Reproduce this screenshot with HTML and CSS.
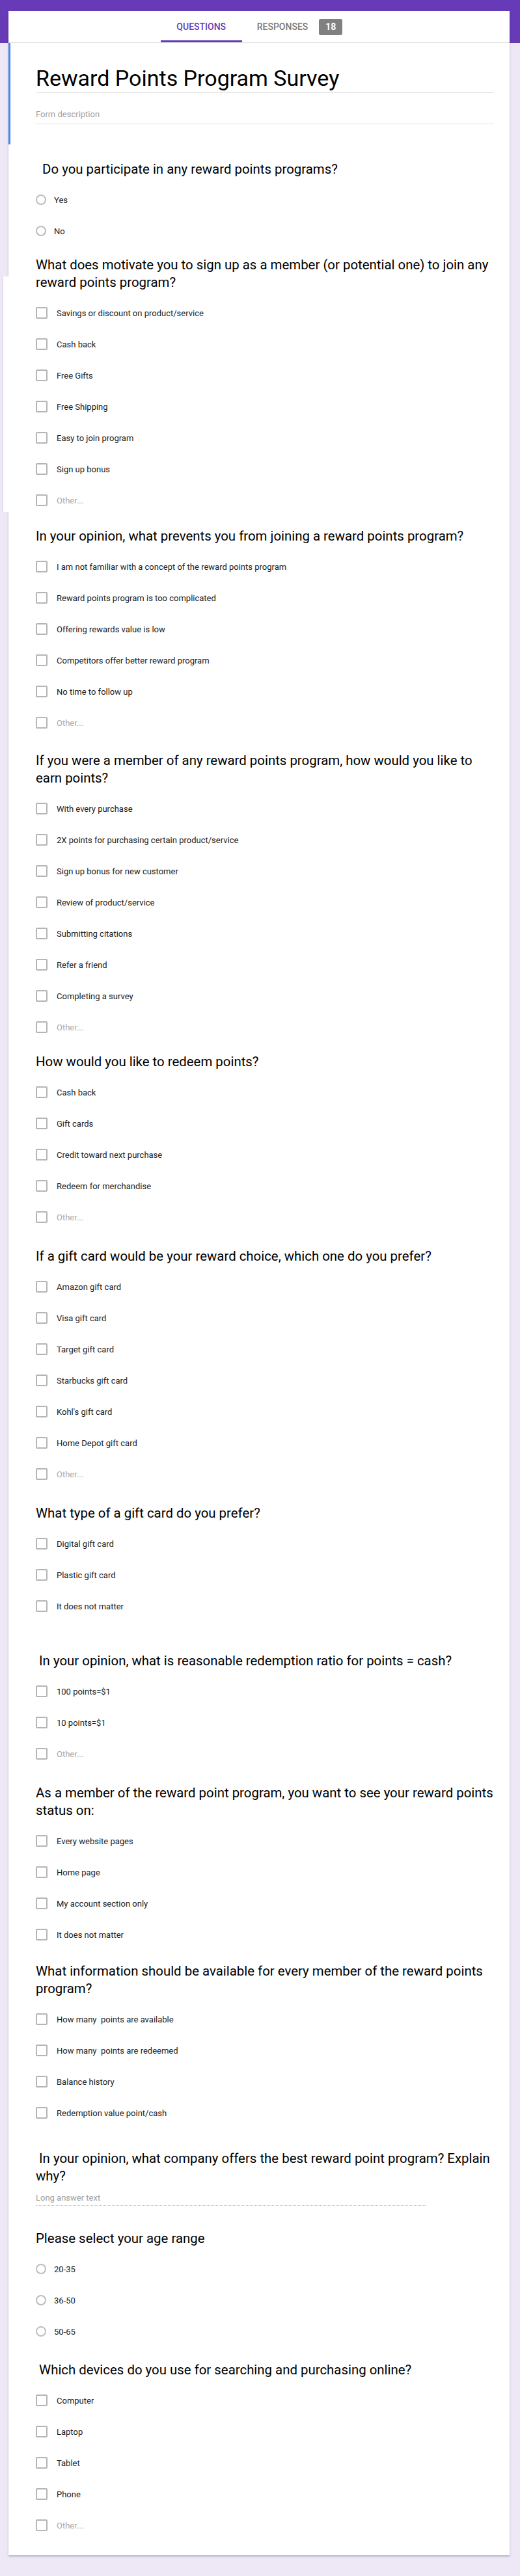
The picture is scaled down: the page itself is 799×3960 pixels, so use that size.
FILE: index.html
```html
<!DOCTYPE html>
<html lang="en">
<head>
<meta charset="utf-8">
<title>Reward Points Program Survey</title>
<link rel="stylesheet" href="styles.css">
</head>
<body>
<div class="page">
  <div class="card">
    <nav class="tabs">
      <div class="tab tab-questions">QUESTIONS</div>
      <div class="tab tab-responses"><span>RESPONSES</span><span class="badge">18</span></div>
    </nav>

    <header class="form-head">
      <h1 class="form-title">Reward Points Program Survey</h1>
      <div class="form-desc">Form description</div>
    </header>

    <section class="q gap-25">
      <h2 class="q-title">&nbsp;&nbsp;Do you participate in any reward points programs?</h2>
      <div class="opt"><span class="radio"></span>Yes</div>
      <div class="opt"><span class="radio"></span>No</div>
    </section>

    <section class="q gap-15 stitched">
      <h2 class="q-title">What does motivate you to sign up as a member (or potential one) to join any<br>reward points program?</h2>
      <div class="opt"><span class="box"></span>Savings or discount on product/service</div>
      <div class="opt"><span class="box"></span>Cash back</div>
      <div class="opt"><span class="box"></span>Free Gifts</div>
      <div class="opt"><span class="box"></span>Free Shipping</div>
      <div class="opt"><span class="box"></span>Easy to join program</div>
      <div class="opt"><span class="box"></span>Sign up bonus</div>
      <div class="opt other"><span class="box"></span>Other...</div>
    </section>

    <section class="q gap-18">
      <h2 class="q-title">In your opinion, what prevents you from joining a reward points program?</h2>
      <div class="opt"><span class="box"></span>I am not familiar with a concept of the reward points program</div>
      <div class="opt"><span class="box"></span>Reward points program is too complicated</div>
      <div class="opt"><span class="box"></span>Offering rewards value is low</div>
      <div class="opt"><span class="box"></span>Competitors offer better reward program</div>
      <div class="opt"><span class="box"></span>No time to follow up</div>
      <div class="opt other"><span class="box"></span>Other...</div>
    </section>

    <section class="q gap-21">
      <h2 class="q-title">If you were a member of any reward points program, how would you like to<br>earn points?</h2>
      <div class="opt"><span class="box"></span>With every purchase</div>
      <div class="opt"><span class="box"></span>2X points for purchasing certain product/service</div>
      <div class="opt"><span class="box"></span>Sign up bonus for new customer</div>
      <div class="opt"><span class="box"></span>Review of product/service</div>
      <div class="opt"><span class="box"></span>Submitting citations</div>
      <div class="opt"><span class="box"></span>Refer a friend</div>
      <div class="opt"><span class="box"></span>Completing a survey</div>
      <div class="opt other"><span class="box"></span>Other...</div>
    </section>

    <section class="q gap-16">
      <h2 class="q-title">How would you like to redeem points?</h2>
      <div class="opt"><span class="box"></span>Cash back</div>
      <div class="opt"><span class="box"></span>Gift cards</div>
      <div class="opt"><span class="box"></span>Credit toward next purchase</div>
      <div class="opt"><span class="box"></span>Redeem for merchandise</div>
      <div class="opt other"><span class="box"></span>Other...</div>
    </section>

    <section class="q gap-23">
      <h2 class="q-title">If a gift card would be your reward choice, which one do you prefer?</h2>
      <div class="opt"><span class="box"></span>Amazon gift card</div>
      <div class="opt"><span class="box"></span>Visa gift card</div>
      <div class="opt"><span class="box"></span>Target gift card</div>
      <div class="opt"><span class="box"></span>Starbucks gift card</div>
      <div class="opt"><span class="box"></span>Kohl's gift card</div>
      <div class="opt"><span class="box"></span>Home Depot gift card</div>
      <div class="opt other"><span class="box"></span>Other...</div>
    </section>

    <section class="q gap-23">
      <h2 class="q-title">What type of a gift card do you prefer?</h2>
      <div class="opt"><span class="box"></span>Digital gift card</div>
      <div class="opt"><span class="box"></span>Plastic gift card</div>
      <div class="opt"><span class="box"></span>It does not matter</div>
    </section>

    <section class="q gap-47">
      <h2 class="q-title">&nbsp;In your opinion, what is reasonable redemption ratio for points = cash?</h2>
      <div class="opt"><span class="box"></span>100 points=$1</div>
      <div class="opt"><span class="box"></span>10 points=$1</div>
      <div class="opt other"><span class="box"></span>Other...</div>
    </section>

    <section class="q gap-23">
      <h2 class="q-title">As a member of the reward point program, you want to see your reward points<br>status on:</h2>
      <div class="opt"><span class="box"></span>Every website pages</div>
      <div class="opt"><span class="box"></span>Home page</div>
      <div class="opt"><span class="box"></span>My account section only</div>
      <div class="opt"><span class="box"></span>It does not matter</div>
    </section>

    <section class="q gap-19">
      <h2 class="q-title">What information should be available for every member of the reward points<br>program?</h2>
      <div class="opt"><span class="box"></span>How many&nbsp; points are available</div>
      <div class="opt"><span class="box"></span>How many&nbsp; points are redeemed</div>
      <div class="opt"><span class="box"></span>Balance history</div>
      <div class="opt"><span class="box"></span>Redemption value point/cash</div>
    </section>

    <section class="q gap-33">
      <h2 class="q-title">&nbsp;In your opinion, what company offers the best reward point program? Explain<br>why?</h2>
      <div class="long">Long answer text</div>
    </section>

    <section class="q gap-37">
      <h2 class="q-title">Please select your age range</h2>
      <div class="opt"><span class="radio"></span>20-35</div>
      <div class="opt"><span class="radio"></span>36-50</div>
      <div class="opt"><span class="radio"></span>50-65</div>
    </section>

    <section class="q gap-22">
      <h2 class="q-title">&nbsp;Which devices do you use for searching and purchasing online?</h2>
      <div class="opt"><span class="box"></span>Computer</div>
      <div class="opt"><span class="box"></span>Laptop</div>
      <div class="opt"><span class="box"></span>Tablet</div>
      <div class="opt"><span class="box"></span>Phone</div>
      <div class="opt other"><span class="box"></span>Other...</div>
    </section>
  </div>
</div>
</body>
</html>
```

FILE: styles.css
```css
html, body {
  margin: 0;
  padding: 0;
}

body {
  background: #ede7f6;
  font-family: Roboto, "Liberation Sans", Arial, sans-serif;
  color: #000;
}

.page {
  background: linear-gradient(#673ab7 0, #673ab7 66px, #ede7f6 66px);
  padding: 17px 16px 23px 13px;
}

.card {
  background: #fff;
  box-shadow: 0 2px 3px rgba(0, 0, 0, 0.22);
  padding-bottom: 22px;
}

/* Tabs */
.tabs {
  height: 48px;
  border-bottom: 1px solid #e0e0e0;
  display: flex;
  justify-content: center;
}

.tab {
  display: flex;
  align-items: center;
  justify-content: center;
  font-size: 14px;
  font-weight: 500;
  color: #7a7a7a;
}

.tab-questions {
  width: 125px;
  color: #673ab7;
  box-shadow: inset 0 -3px 0 #673ab7;
}

.tab-responses {
  padding: 0 23px;
  gap: 17px;
}

.badge {
  width: 36px;
  height: 25px;
  border-radius: 3px;
  background: #808080;
  color: #fff;
  font-weight: 700;
  font-size: 14px;
  display: flex;
  align-items: center;
  justify-content: center;
}

/* Form header */
.form-head {
  border-left: 3px solid #4285f4;
  padding: 34px 24px 31px 39px;
}

.form-title {
  margin: 0;
  font-size: 34px;
  font-weight: 400;
  line-height: 40px;
  padding-bottom: 2px;
  border-bottom: 1px solid #e0e0e0;
  color: #000;
}

.form-desc {
  margin-top: 23px;
  font-size: 13px;
  line-height: 20px;
  padding-bottom: 4px;
  border-bottom: 1px solid #e0e0e0;
  color: #9e9e9e;
}

/* Questions */
.q {
  padding: 0 10px 0 42px;
}

.gap-15 { padding-top: 15px; }
.gap-16 { padding-top: 16px; }
.gap-18 { padding-top: 18px; }
.gap-19 { padding-top: 19px; }
.gap-21 { padding-top: 21px; }
.gap-22 { padding-top: 22px; }
.gap-23 { padding-top: 23px; }
.gap-25 { padding-top: 25px; }
.gap-33 { padding-top: 33px; }
.gap-37 { padding-top: 37px; }
.gap-47 { padding-top: 47px; }

/* screenshot seam: a slice of the card that sits a few px further left */
.stitched {
  position: relative;
}

.stitched::before {
  content: "";
  position: absolute;
  left: -9px;
  top: 46px;
  bottom: 6px;
  width: 8px;
  background: #fff;
  border-left: 1px solid #d6d3dc;
}

.q-title {
  margin: 0 0 9px;
  font-size: 20.4px;
  font-weight: 400;
  line-height: 27px;
  color: #000;
  white-space: nowrap;
}

.opt {
  height: 48px;
  display: flex;
  align-items: center;
  font-size: 13px;
  color: #212121;
  white-space: pre;
}

.other {
  color: #a8a8a8;
}

.box {
  flex: none;
  width: 18px;
  height: 18px;
  box-sizing: border-box;
  border: 2px solid #b5b5b5;
  border-radius: 2px;
  margin-right: 14px;
}

.radio {
  flex: none;
  width: 16px;
  height: 16px;
  box-sizing: border-box;
  border: 2px solid #bdbdbd;
  border-radius: 50%;
  margin-right: 12px;
}

.long {
  margin-top: 10px;
  width: 600px;
  font-size: 13px;
  line-height: 20px;
  padding-bottom: 1px;
  border-bottom: 1px dotted #bdbdbd;
  color: #9e9e9e;
}
```
